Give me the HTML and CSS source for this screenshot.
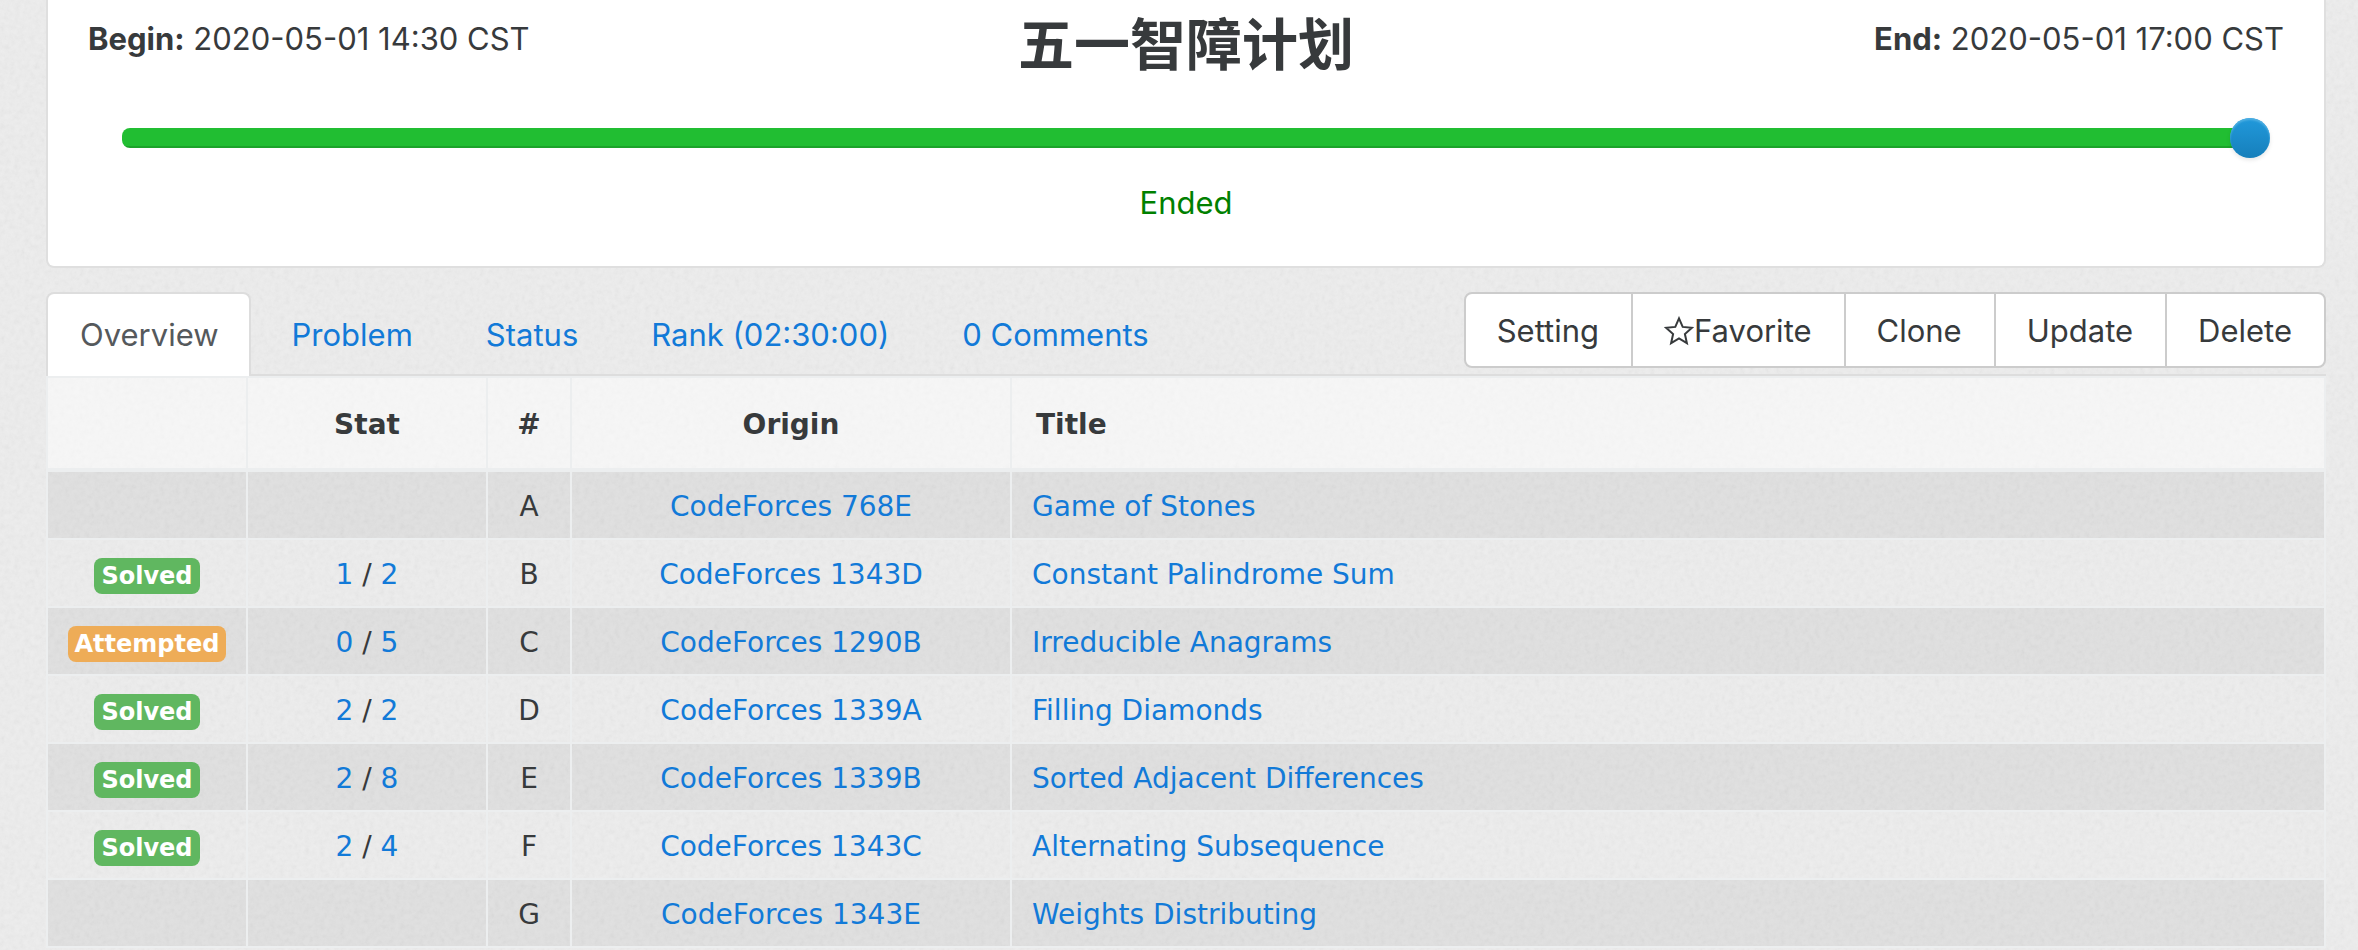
FILE: index.html
```html
<!DOCTYPE html>
<html lang="en">
<head>
<meta charset="utf-8">
<title>五一智障计划</title>
<link rel="stylesheet" href="styles.css">
</head>
<body>
<main class="page">
  <section class="contest">
    <div class="contest-head">
      <div class="time"><b>Begin:</b> 2020-05-01 14:30 CST</div>
      <h1 class="contest-title" lang="zh-CN">五一智障计划</h1>
      <div class="time time-end"><b>End:</b> 2020-05-01 17:00 CST</div>
    </div>
    <input class="timeline" type="range" min="0" max="150" value="150" aria-label="Contest time">
    <p class="contest-state">Ended</p>
  </section>

  <div class="toolbar">
    <nav class="tabs">
      <a class="tab tab-active" href="#overview">Overview</a>
      <a class="tab" href="#problem">Problem</a>
      <a class="tab" href="#status">Status</a>
      <a class="tab" href="#rank">Rank (02:30:00)</a>
      <a class="tab" href="#comments">0 Comments</a>
    </nav>
    <div class="actions">
      <button class="action" type="button">Setting</button>
      <button class="action" type="button"><svg class="star" viewBox="0 0 30 30" aria-hidden="true"><path d="M15 2.4l3.7 8.5 9.2.9-7 6.2 2 9.2-7.9-4.8-7.9 4.8 2-9.2-7-6.2 9.2-.9z"/></svg>Favorite</button>
      <button class="action" type="button">Clone</button>
      <button class="action" type="button">Update</button>
      <button class="action" type="button">Delete</button>
    </div>
  </div>

  <table class="problems">
    <colgroup><col class="col-state"><col class="col-stat"><col class="col-num"><col class="col-origin"><col></colgroup>
    <thead>
      <tr><th></th><th>Stat</th><th>#</th><th>Origin</th><th class="title">Title</th></tr>
    </thead>
    <tbody>
      <tr><td></td><td></td><td>A</td><td><a href="#a">CodeForces 768E</a></td><td class="title"><a href="#a">Game of Stones</a></td></tr>
      <tr><td><span class="badge solved">Solved</span></td><td><a href="#b">1</a> / <a href="#b">2</a></td><td>B</td><td><a href="#b">CodeForces 1343D</a></td><td class="title"><a href="#b">Constant Palindrome Sum</a></td></tr>
      <tr><td><span class="badge attempted">Attempted</span></td><td><a href="#c">0</a> / <a href="#c">5</a></td><td>C</td><td><a href="#c">CodeForces 1290B</a></td><td class="title"><a href="#c">Irreducible Anagrams</a></td></tr>
      <tr><td><span class="badge solved">Solved</span></td><td><a href="#d">2</a> / <a href="#d">2</a></td><td>D</td><td><a href="#d">CodeForces 1339A</a></td><td class="title"><a href="#d">Filling Diamonds</a></td></tr>
      <tr><td><span class="badge solved">Solved</span></td><td><a href="#e">2</a> / <a href="#e">8</a></td><td>E</td><td><a href="#e">CodeForces 1339B</a></td><td class="title"><a href="#e">Sorted Adjacent Differences</a></td></tr>
      <tr><td><span class="badge solved">Solved</span></td><td><a href="#f">2</a> / <a href="#f">4</a></td><td>F</td><td><a href="#f">CodeForces 1343C</a></td><td class="title"><a href="#f">Alternating Subsequence</a></td></tr>
      <tr><td></td><td></td><td>G</td><td><a href="#g">CodeForces 1343E</a></td><td class="title"><a href="#g">Weights Distributing</a></td></tr>
    </tbody>
  </table>
</main>
</body>
</html>
```

FILE: styles.css
```css
* { box-sizing: border-box; }

body {
  margin: 0;
  color: #373a3c;
  background-color: #ededed;
  background-image: url("data:image/svg+xml,%3Csvg xmlns='http://www.w3.org/2000/svg' width='400' height='400'%3E%3Cfilter id='n' x='0' y='0' width='100%25' height='100%25'%3E%3CfeTurbulence type='fractalNoise' baseFrequency='.2' numOctaves='3' stitchTiles='stitch'/%3E%3CfeColorMatrix type='saturate' values='0'/%3E%3C/filter%3E%3Crect width='400' height='400' filter='url(%23n)' opacity='.12'/%3E%3C/svg%3E");
  font: 31px/50px Inter, "Liberation Sans", "Noto Sans CJK SC", sans-serif;
}

a { color: #127ad8; text-decoration: none; }

.page { padding: 0 32px 0 46px; }

.contest {
  padding: 0 40px 38px;
  background: #fff;
  border: 2px solid #dfdfdf;
  border-top: 0;
  border-radius: 0 0 8px 8px;
}

.contest-head {
  display: grid;
  grid-template-columns: 1fr auto 1fr;
  padding-top: 14px;
}

.time-end { text-align: right; }

.contest-title {
  margin: 0;
  font: 700 56px/54px "Noto Sans CJK SC", sans-serif;
}

.timeline {
  appearance: none;
  display: block;
  width: calc(100% - 48px);
  height: 40px;
  margin: 50px auto 0 34px;
  background: none;
}

.timeline::-webkit-slider-runnable-track {
  height: 20px;
  background: linear-gradient(#21be32 18px, #1ca32a 18px) left / calc(100% - 20px) 20px no-repeat;
  border-radius: 8px;
}

.timeline::-webkit-slider-thumb {
  appearance: none;
  width: 40px;
  height: 40px;
  margin-top: -10px;
  background: linear-gradient(#2199db, #167fbb);
  border-radius: 50%;
  box-shadow: inset 0 2px 2px #4fafe2, 0 2px 4px rgba(0, 0, 0, .1);
}

.contest-state {
  margin: 20px 0 0;
  color: #008000;
  text-align: center;
}

.toolbar {
  display: flex;
  justify-content: space-between;
  margin-top: 24px;
  border-bottom: 2px solid #ddd;
}

.tabs {
  display: flex;
  gap: 7px;
  margin-bottom: -2px;
}

.tab {
  padding: 16px 30px 16px 32px;
  border: 2px solid transparent;
  border-bottom: 0;
  border-radius: 8px 8px 0 0;
}

.tab-active {
  color: #55595c;
  background: #fff;
  border-color: #ddd;
}

.actions {
  display: flex;
  height: 76px;
  margin-bottom: 6px;
}

.action {
  display: flex;
  align-items: center;
  margin-left: -2px;
  padding: 2px 32px 0 31px;
  color: #373a3c;
  background: #fff;
  border: 2px solid #ccc;
  font: inherit;
}

.action:first-child { margin-left: 0; border-radius: 8px 0 0 8px; }
.action:last-child { border-radius: 0 8px 8px 0; }

.star {
  width: 30px;
  height: 30px;
  fill: none;
  stroke: #373a3c;
  stroke-width: 2;
}

.problems {
  width: 100%;
  table-layout: fixed;
  border-collapse: collapse;
  font: 28px/42px "DejaVu Sans", sans-serif;
  text-align: center;
}

.col-state { width: 200px; }
.col-stat { width: 240px; }
.col-num { width: 84px; }
.col-origin { width: 440px; }

.problems th,
.problems td {
  padding: 14px 20px 10px;
  border: 2px solid #eceeef;
}

.problems th {
  padding: 26px 24px 22px;
  background: rgba(255, 255, 255, .5);
  border-bottom-width: 4px;
}

.problems td:first-child { padding-right: 0; padding-left: 0; }
.problems .title { text-align: left; }
.problems tbody tr:nth-child(odd) { background: rgba(0, 0, 0, .05); }

.badge {
  display: inline-block;
  padding: 6px 7px;
  color: #fff;
  border-radius: 8px;
  font-size: 24px;
  font-weight: 700;
  line-height: 24px;
}

.solved { background: #60b760; }
.attempted { background: #eeac57; }
```
